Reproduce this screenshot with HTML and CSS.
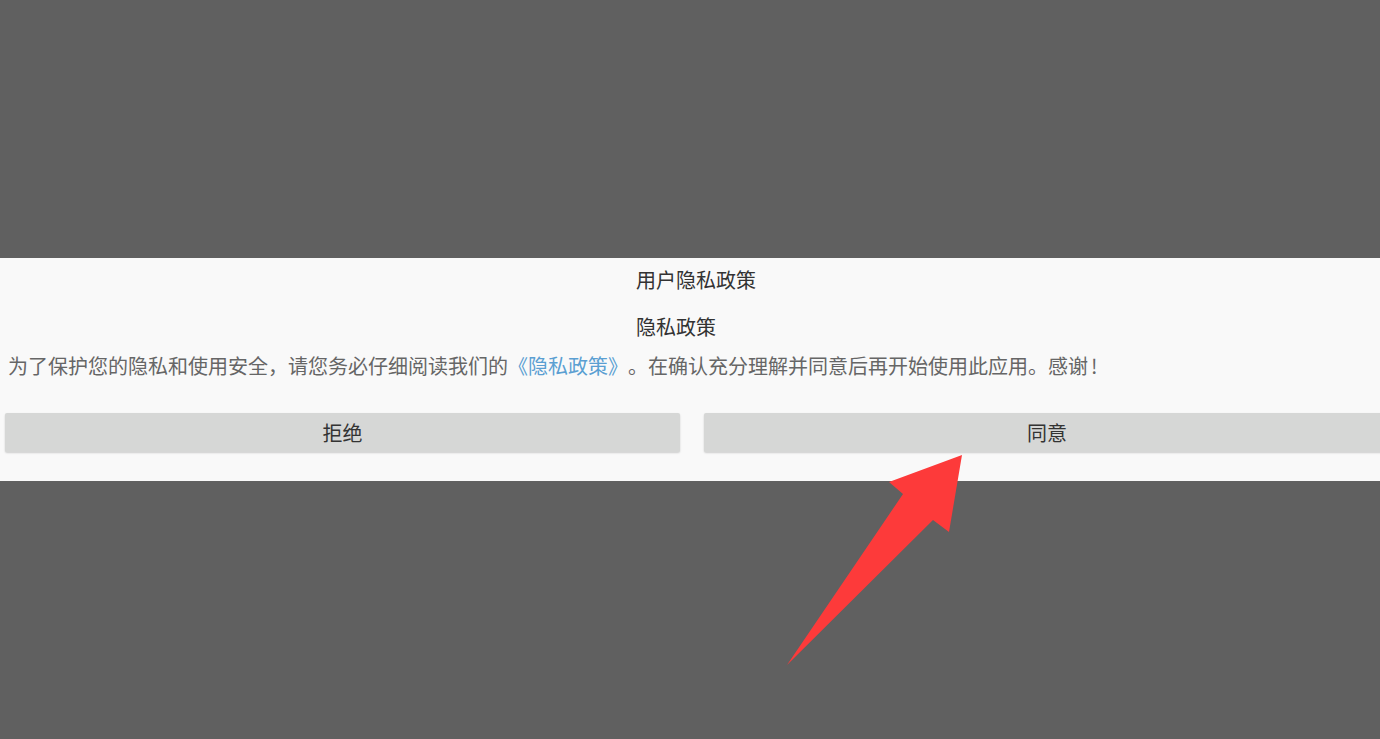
FILE: index.html
```html
<!DOCTYPE html>
<html lang="zh-CN">
<head>
<meta charset="utf-8">
<title>用户隐私政策</title>
<link rel="stylesheet" href="styles.css">
</head>
<body>
<div class="screen">
  <section class="dialog">
    <div class="heads">
      <div class="title">用户隐私政策</div>
      <div class="subtitle">隐私政策</div>
    </div>
    <p class="content">为了保护您的隐私和使用安全，请您务必仔细阅读我们的<span class="link">《隐私政策》</span>。在确认充分理解并同意后再开始使用此应用。感谢<span class="excl">!</span></p>
    <div class="actions">
      <button class="btn btn-left">拒绝</button>
      <button class="btn btn-right">同意</button>
    </div>
  </section>
  <svg class="arrow" width="1380" height="739" viewBox="0 0 1380 739">
    <polygon points="962,455 949,532 933,520 787,665 903,494 889,482" fill="#fd3a3a"/>
  </svg>
</div>
</body>
</html>
```
FILE: styles.css
```css
html, body {
  margin: 0;
  padding: 0;
  width: 1380px;
  height: 739px;
  overflow: hidden;
  background: #606060;
  font-family: "Noto Sans CJK SC", "Noto Sans", sans-serif;
  text-spacing-trim: space-all;
  font-feature-settings: "halt" 0, "chws" 0;
}
.screen {
  position: relative;
  width: 1380px;
  height: 739px;
  overflow: hidden;
  padding-top: 258px;
  box-sizing: border-box;
}
.dialog {
  background: #f9f9f9;
  height: 223px;
  box-sizing: border-box;
}
.heads {
  padding-left: 636px;
  color: #333333;
  font-size: 20px;
}
.title {
  line-height: 44px;
  height: 44px;
}
.subtitle {
  line-height: 50px;
  height: 50px;
}
.content {
  margin: 0;
  padding-left: 8px;
  font-size: 20px;
  line-height: 28px;
  height: 28px;
  color: #666666;
  white-space: nowrap;
  text-spacing-trim: space-all;
}
.link {
  color: #5b9fd2;
}
.excl {
  margin-left: 3px;
}
.actions {
  display: flex;
  gap: 24px;
  padding-left: 5px;
  margin-top: 33px;
}
.btn {
  flex: none;
  height: 39px;
  border: none;
  border-radius: 2px;
  background: #d6d7d6;
  box-shadow: 0 1px 2px rgba(0, 0, 0, 0.18);
  color: #333333;
  font-family: "Noto Sans CJK SC", "Noto Sans", sans-serif;
  font-size: 20px;
  padding: 0;
}
.btn-left {
  width: 675px;
}
.btn-right {
  width: 686px;
}
.arrow {
  position: absolute;
  left: 0;
  top: 0;
}
```
